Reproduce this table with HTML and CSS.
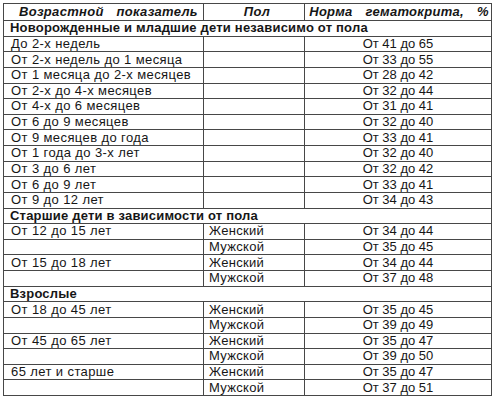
FILE: index.html
```html
<!DOCTYPE html>
<html lang="ru">
<head>
<meta charset="utf-8">
<link rel="stylesheet" href="styles.css">
</head>
<body>
<table class="norms">
  <colgroup>
    <col class="c-age">
    <col class="c-sex">
    <col class="c-val">
  </colgroup>
  <thead>
    <tr class="head">
      <th class="h-age">Возрастной показатель</th>
      <th class="h-sex">Пол</th>
      <th class="h-val">Норма гематокрита, %</th>
    </tr>
  </thead>
  <tbody>
    <tr class="section"><td colspan="3">Новорожденные и младшие дети независимо от пола</td></tr>
    <tr><td class="age">До 2-х недель</td><td class="sex"></td><td class="val">От 41 до 65</td></tr>
    <tr><td class="age">От 2-х недель до 1 месяца</td><td class="sex"></td><td class="val">От 33 до 55</td></tr>
    <tr><td class="age">От 1 месяца до 2-х месяцев</td><td class="sex"></td><td class="val">От 28 до 42</td></tr>
    <tr><td class="age">От 2-х до 4-х месяцев</td><td class="sex"></td><td class="val">От 32 до 44</td></tr>
    <tr><td class="age">От 4-х до 6 месяцев</td><td class="sex"></td><td class="val">От 31 до 41</td></tr>
    <tr><td class="age">От 6 до 9 месяцев</td><td class="sex"></td><td class="val">От 32 до 40</td></tr>
    <tr><td class="age">От 9 месяцев до года</td><td class="sex"></td><td class="val">От 33 до 41</td></tr>
    <tr><td class="age">От 1 года до 3-х лет</td><td class="sex"></td><td class="val">От 32 до 40</td></tr>
    <tr><td class="age">От 3 до 6 лет</td><td class="sex"></td><td class="val">От 32 до 42</td></tr>
    <tr><td class="age">От 6 до 9 лет</td><td class="sex"></td><td class="val">От 33 до 41</td></tr>
    <tr><td class="age">От 9 до 12 лет</td><td class="sex"></td><td class="val">От 34 до 43</td></tr>
    <tr class="section"><td colspan="3">Старшие дети в зависимости от пола</td></tr>
    <tr><td class="age">От 12 до 15 лет</td><td class="sex">Женский</td><td class="val">От 34 до 44</td></tr>
    <tr><td class="age"></td><td class="sex">Мужской</td><td class="val">От 35 до 45</td></tr>
    <tr><td class="age">От 15 до 18 лет</td><td class="sex">Женский</td><td class="val">От 34 до 44</td></tr>
    <tr><td class="age"></td><td class="sex">Мужской</td><td class="val">От 37 до 48</td></tr>
    <tr class="section"><td colspan="3">Взрослые</td></tr>
    <tr><td class="age">От 18 до 45 лет</td><td class="sex">Женский</td><td class="val">От 35 до 45</td></tr>
    <tr><td class="age"></td><td class="sex">Мужской</td><td class="val">От 39 до 49</td></tr>
    <tr><td class="age">От 45 до 65 лет</td><td class="sex">Женский</td><td class="val">От 35 до 47</td></tr>
    <tr><td class="age"></td><td class="sex">Мужской</td><td class="val">От 39 до 50</td></tr>
    <tr><td class="age">65 лет и старше</td><td class="sex">Женский</td><td class="val">От 35 до 47</td></tr>
    <tr><td class="age"></td><td class="sex">Мужской</td><td class="val">От 37 до 51</td></tr>
  </tbody>
</table>
</body>
</html>
```

FILE: styles.css
```css
html, body {
  background: #ffffff;
}
body {
  margin: 3px 0 0 3px;
  font-family: "Liberation Sans", Arial, sans-serif;
  font-size: 13px;
  color: #161616;
}
.norms {
  border-collapse: collapse;
  table-layout: fixed;
  width: 488px;
}
.c-age { width: 200px; }
.c-sex { width: 101px; }
.c-val { width: 187px; }

.norms th,
.norms td {
  border: 1px solid #474747;
  padding: 0;
  line-height: 14px;
  white-space: nowrap;
  overflow: hidden;
  vertical-align: middle;
}
.norms tr {
  height: 15.625px;
}
.norms tr.head {
  height: 17px;
}
.norms th {
  font-weight: bold;
  font-style: italic;
  word-spacing: 9px;
  letter-spacing: 0.3px;
}
.norms th.h-age { text-align: left; padding-left: 15px; }
.norms th.h-sex { text-align: center; padding-left: 6px; }
.norms th.h-val { text-align: center; padding-left: 2px; }

.norms .section td {
  font-weight: bold;
  padding-left: 6px;
  text-align: left;
  letter-spacing: 0.2px;
}
.norms td.age { padding-left: 7px; letter-spacing: 0.4px; }
.norms td.sex { padding-left: 5px; letter-spacing: 0.3px; }
.norms td.val { text-align: center; }
```
